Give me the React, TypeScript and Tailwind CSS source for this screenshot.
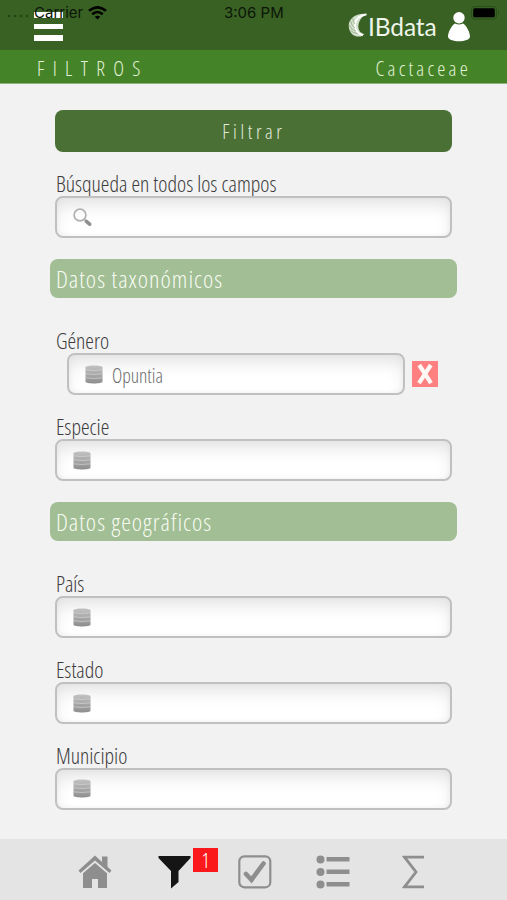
import type { ReactNode } from 'react';

interface FieldProps {
  label: string;
  value?: string;
  icon?: 'search' | 'db';
  clearable?: boolean;
}

function DbIcon() {
  return (
    <svg width="18" height="19" viewBox="0 0 18 19">
      <defs>
        <linearGradient id="db" x1="0" y1="0" x2="0" y2="1">
          <stop offset="0" stopColor="#c2c2c2" />
          <stop offset="1" stopColor="#8e8e8e" />
        </linearGradient>
      </defs>
      <path d="M0.5 2.2C0.5 0 17.5 0 17.5 2.2V16.8C17.5 19 0.5 19 0.5 16.8Z" fill="url(#db)" />
      <g fill="none" stroke="#d2d2d2" strokeWidth="0.7">
        <path d="M0.5 4.8Q9 6.2 17.5 4.8" />
        <path d="M0.5 8.8Q9 10.2 17.5 8.8" />
        <path d="M0.5 12.8Q9 14.2 17.5 12.8" />
      </g>
    </svg>
  );
}

function SearchIcon() {
  return (
    <svg width="19" height="19" viewBox="0 0 19 19" fill="none">
      <circle cx="7" cy="7" r="5.9" stroke="#b0b0b0" strokeWidth="1.7" />
      <path d="M11 11L13 13" stroke="#b0b0b0" strokeWidth="1.5" />
      <path d="M13.4 13.4L16.6 16.2" stroke="#8f8f8f" strokeWidth="3.6" strokeLinecap="round" />
    </svg>
  );
}

function Field({ label, value, icon = 'db', clearable }: FieldProps) {
  return (
    <div>
      <div className="h-6 pl-[0.5px] text-[21.8px] leading-6 text-[#3c3c3c]">{label}</div>
      <div className={clearable ? 'flex items-center pl-3' : 'flex items-center'}>
        <div className={`flex h-[42px] items-center rounded-lg border-2 border-[#c0c0c0] bg-white px-[15.5px] shadow-[inset_0_10px_18px_-4px_#e0e0e0,inset_0_0_5px_#f0f0f0] ${clearable ? 'w-[338px]' : 'w-full'}`}>
          {icon === 'search' ? <SearchIcon /> : <DbIcon />}
          {value && <span className="ml-[9px] pt-0.5 text-[19.5px] text-[#6c6c6c]">{value}</span>}
        </div>
        {clearable && (
          <button className="ml-[6.5px] flex h-[26px] w-[26px] items-center justify-center bg-[#ff8080]">
            <svg width="26" height="26" viewBox="0 0 26 26" stroke="#fff8f4" strokeWidth="4.2">
              <path d="M7.2 4L19 22.2M18.8 4L7 22.2" />
            </svg>
          </button>
        )}
      </div>
    </div>
  );
}

function Section({ title, children }: { title: string; children: ReactNode }) {
  return (
    <section className="mt-[21px]">
      <h2 className="-mx-[5px] h-[39px] rounded-lg bg-[#a1be94] pl-[5.5px] text-[24.5px] leading-[40px] tracking-[1px] text-[#f7fbf2]">{title}</h2>
      <div className="mt-[31.4px] flex flex-col gap-[19.7px]">{children}</div>
    </section>
  );
}

function Logo() {
  return (
    <div className="flex h-[26px] items-center">
      <svg width="20" height="26" viewBox="0 0 20 26">
        <path d="M19 2C8 0.5 1 7 0.7 13C0.5 20 5 25.5 13 24.5L16.5 22C8 21 8 7 19 2Z" fill="#d3e0cc" />
        <path d="M18.5 2.3Q6.5 4.5 7 14Q8 22 15 23" fill="none" stroke="#ffffff" strokeWidth="1.8" />
        <path d="M4.5 5.5Q5 10 7 12M2.4 8.5Q3.5 14 7 16M1.2 13Q3 18 8 19M2.4 18.5Q5 21 10 21.5" fill="none" stroke="#7f9c70" strokeWidth="0.6" />
      </svg>
      <span className="w-[69px] pt-1 whitespace-nowrap font-['Lato',sans-serif] text-[24.5px] leading-[26px] font-normal tracking-[-0.1px] text-[#eef5e9]">IBdata</span>
    </div>
  );
}

export default function App() {
  return (
    <div className="relative flex h-[900px] w-[507px] flex-col overflow-hidden bg-[#f2f2f2] font-['Open_Sans',sans-serif] font-light font-stretch-condensed">
      <header className="flex h-[50px] shrink-0 justify-between bg-[#396123] pr-[36px] pl-[34px]">
        <div className="mt-[12px] flex flex-col gap-[6px]">
          <span className="h-[5.5px] w-[29px] bg-white" />
          <span className="h-[5.5px] w-[29px] bg-white" />
          <span className="h-[5.5px] w-[29px] bg-white" />
        </div>
        <div className="mt-[12px] flex h-[30px] items-start">
          <Logo />
          <svg className="ml-[10px]" width="24" height="30" viewBox="0 0 24 30" fill="#fff">
            <circle cx="12" cy="5.7" r="5.7" />
            <path d="M8 11.5C5 13 1 20 1 24.5C1 30.8 23 30.8 23 24.5C23 20 19 13 16 11.5Q12 13.5 8 11.5Z" />
          </svg>
        </div>
      </header>
      <div className="absolute top-0 left-0 flex h-[26px] w-full items-center font-['Inter',sans-serif] text-[15px] font-normal text-[#0c1608]">
        <svg className="mt-1 ml-[7px]" width="22" height="6" viewBox="0 0 22 6" fill="#254415">
          <circle cx="2" cy="4" r="1.3" /><circle cx="8" cy="4" r="1.3" /><circle cx="14" cy="4" r="1.3" /><circle cx="20" cy="4" r="1.3" />
        </svg>
        <span className="ml-[5px] w-[48px] pt-px">Carrier</span>
        <svg className="ml-[6px]" width="19" height="14" viewBox="0 0 19 14" fill="none" stroke="#000" strokeWidth="2.6">
          <path d="M1 4.8Q9.5-2.2 18 4.8M4.2 8.2Q9.5 3.8 14.8 8.2" />
          <path d="M6.8 10.8Q9.5 8.5 12.2 10.8L9.5 13.5Z" fill="#000" stroke="none" />
        </svg>
        <span className="ml-[117px] w-[62px] pt-px whitespace-nowrap">3:06 PM</span>
        <svg className="ml-auto mr-[7px]" width="29" height="14" viewBox="0 0 29 14">
          <rect x="0.5" y="0.5" width="25" height="12.5" rx="3" fill="none" stroke="#2b4e1a" />
          <rect x="2.2" y="2.2" width="21.6" height="9" rx="1.5" fill="#000" />
          <path d="M27 4.8Q29 6.8 27 8.8Z" fill="#274916" />
        </svg>
      </div>
      <div className="flex h-[34px] shrink-0 items-center justify-between border-b border-[#8fb57d] bg-[#458328] pr-[36px] pl-[37px] text-[20.5px] text-[#e2f2d5]">
        <span className="pt-1 tracking-[8.3px]">FILTROS</span>
        <span className="pt-1 tracking-[3.2px]">Cactaceae</span>
      </div>

      <main className="flex-1 pt-[26px] pr-[54.6px] pl-[55.4px]">
        <button className="mb-5 block h-[42px] w-full rounded-lg bg-[#4a7035] text-[20px] leading-[44px] tracking-[3.6px] text-[#e2ecda]">Filtrar</button>
        <Field label="Búsqueda en todos los campos" icon="search" />
        <Section title="Datos taxonómicos">
          <Field label="Género" value="Opuntia" clearable />
          <Field label="Especie" />
        </Section>
        <Section title="Datos geográficos">
          <Field label="País" />
          <Field label="Estado" />
          <Field label="Municipio" />
        </Section>
      </main>

      <nav className="relative flex h-[61px] shrink-0 items-center bg-[#e4e4e4] pt-1 pl-[78px]">
        <svg width="34" height="34" viewBox="0 0 34 34" fill="#8e8e8e">
          <path d="M17 0.5L0.5 15.5L2.5 18L17 5.5L31.5 18L33.5 15.5L29.5 11.8V1.5H24V7Z" />
          <path d="M17 8L5 18.3V33H14V24H20V33H29V18.3Z" />
        </svg>
        <svg className="ml-[46px]" width="33" height="34" viewBox="0 0 33 34" fill="#151515">
          <path d="M0.5 1H32.5V3L20.5 16V27L13 33.5V16L0.5 3Z" />
        </svg>
        <svg className="ml-[47px]" width="34" height="34" viewBox="0 0 34 34" fill="none" stroke="#8e8e8e">
          <rect x="1.3" y="1.3" width="31" height="31" rx="5" strokeWidth="2.2" />
          <path d="M8 19L13.5 24.8L25.5 8.5" strokeWidth="4.6" strokeLinecap="round" />
        </svg>
        <svg className="ml-[44px]" width="34" height="34" viewBox="0 0 34 34" fill="#8e8e8e">
          <circle cx="4.5" cy="4.5" r="4" /><circle cx="4.5" cy="17" r="4" /><circle cx="4.5" cy="29.5" r="4" />
          <path d="M10.5 2H33.5V6.5H10.5ZM10.5 14.5H33.5V19H10.5ZM10.5 27H33.5V31.5H10.5Z" />
        </svg>
        <svg className="ml-[52px]" width="23" height="34" viewBox="0 0 23 34" fill="none" stroke="#8e8e8e" strokeWidth="2.8">
          <path d="M22 2.2H2.5L14 17L2.5 31.8H22" />
        </svg>
        <span className="absolute top-[9px] left-[193px] h-[24px] w-[25px] bg-[#fb181d] text-center text-[20px] leading-[25px] text-white">1</span>
      </nav>
    </div>
  );
}
